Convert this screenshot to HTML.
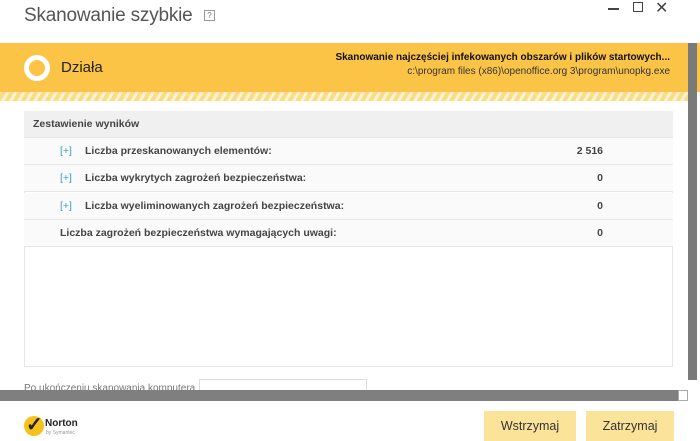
<!DOCTYPE html>
<html><head><meta charset="utf-8"><style>
*{margin:0;padding:0;box-sizing:border-box}
body{width:700px;height:441px;background:#fff;font-family:"Liberation Sans",sans-serif;position:relative;overflow:hidden}
.a{position:absolute}
.row{position:absolute;left:24px;width:649px;height:27px;border-bottom:1px solid #e6e6e6;background:#fafafa;font-size:10.5px;font-weight:bold;color:#444;line-height:27px}
.row .p{color:#3b9ec8;font-weight:normal;position:absolute;left:36px}
.row .l{position:absolute;left:61px}
.row .v{position:absolute;right:70px}
.btn{position:absolute;top:411px;height:30px;background:#fbe39a;font-size:12.5px;color:#333;text-align:center;line-height:30px}
</style></head><body>
<div class="a" style="left:24px;top:5px;font-size:19px;color:#555;letter-spacing:-0.2px">Skanowanie szybkie</div>
<div class="a" style="left:204px;top:10px;width:11px;height:11px;border:1px solid #999;font-size:8px;color:#777;text-align:center;line-height:9px">?</div>
<div class="a" style="left:608px;top:8px;width:11px;height:1.5px;background:#444"></div>
<div class="a" style="left:633px;top:2px;width:10px;height:10px;border:1.5px solid #444"></div>
<div class="a" style="left:655px;top:-2px;font-size:16px;color:#444">✕</div>
<div class="a" style="left:0;top:43px;width:700px;height:49px;background:#fbc447"></div>
<div class="a" style="left:0;top:92px;width:688px;height:9px;background:repeating-linear-gradient(-60deg,#fbdc85 0 4px,#fdf3d2 4px 7px)"></div>
<div class="a" style="left:24px;top:55px;width:26px;height:26px;border-radius:50%;border:5px solid #fff"></div>
<div class="a" style="left:61px;top:59px;font-size:15px;color:#222">Działa</div>
<div class="a" style="right:30px;top:52px;font-size:10px;font-weight:bold;color:#111">Skanowanie najczęściej infekowanych obszarów i plików startowych...</div>
<div class="a" style="right:30px;top:66px;font-size:10px;color:#333">c:\program files (x86)\openoffice.org 3\program\unopkg.exe</div>
<div class="a" style="left:24px;top:111px;width:649px;height:256px;border:1px solid #e6e6e6"></div>
<div class="row" style="top:111px;background:#f0f0f0;"><span style="position:absolute;left:9px">Zestawienie wyników</span></div>
<div class="row" style="top:138px"><span class="p">[+]</span><span class="l">Liczba przeskanowanych elementów:</span><span class="v">2 516</span></div>
<div class="row" style="top:165px"><span class="p">[+]</span><span class="l">Liczba wykrytych zagrożeń bezpieczeństwa:</span><span class="v">0</span></div>
<div class="row" style="top:193px"><span class="p">[+]</span><span class="l">Liczba wyeliminowanych zagrożeń bezpieczeństwa:</span><span class="v">0</span></div>
<div class="row" style="top:220px"><span class="l" style="left:36px">Liczba zagrożeń bezpieczeństwa wymagających uwagi:</span><span class="v">0</span></div>
<div class="a" style="left:24px;top:383px;font-size:10px;color:#777">Po ukończeniu skanowania komputera</div>
<div class="a" style="left:199px;top:379px;width:168px;height:14px;border:1px solid #ddd"></div>
<div class="a" style="left:688px;top:43px;width:9px;height:337px;background:#7a7a7a"></div>
<div class="a" style="left:0;top:390px;width:678px;height:11px;background:#7f7f7f"></div>
<div class="a" style="left:678px;top:390px;width:10px;height:11px;background:#fff;border:1px solid #aaa"></div>
<div class="a" style="left:24px;top:416px;width:20px;height:20px;border-radius:50%;background:#f6c21a"></div>
<div class="a" style="left:26px;top:412px;font-size:20px;color:#222;font-weight:bold">✓</div>
<div class="a" style="left:45px;top:418px;font-size:10px;font-weight:bold;color:#222">Norton</div>
<div class="a" style="left:46px;top:430px;font-size:5px;color:#999">by Symantec</div>
<div class="btn" style="left:484px;width:92px">Wstrzymaj</div>
<div class="btn" style="left:586px;width:88px">Zatrzymaj</div>
</body></html>
